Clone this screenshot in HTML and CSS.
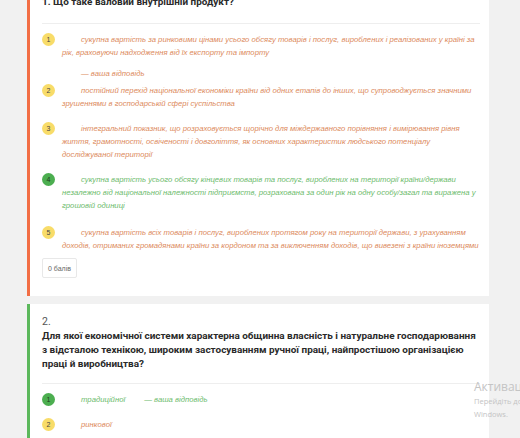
FILE: index.html
```html
<!DOCTYPE html>
<html lang="uk">
<head>
<meta charset="utf-8">
<link rel="stylesheet" href="styles.css">
</head>
<body>
<main class="page">
  <section class="card card-wrong">
    <h2 class="q-title">1. Що таке валовий внутрішній продукт?</h2>
    <hr class="divider">
    <div class="answers">
      <div class="answer answer-chosen">
        <span class="badge badge-yellow">1</span>
        <div class="a-body">
          <p class="a-text a-red">сукупна вартість за ринковими цінами усього обсягу товарів і послуг, вироблених і реалізованих у країні за рік, враховуючи надходження від їх експорту та імпорту</p>
          <p class="your-answer a-red">— ваша відповідь</p>
        </div>
      </div>
      <div class="answer">
        <span class="badge badge-yellow">2</span>
        <div class="a-body">
          <p class="a-text a-red">постійний перехід національної економіки країни від одних етапів до інших, що супроводжується значними зрушеннями в господарській сфері суспільства</p>
        </div>
      </div>
      <div class="answer">
        <span class="badge badge-yellow">3</span>
        <div class="a-body">
          <p class="a-text a-red">інтегральний показник, що розраховується щорічно для міждержавного порівняння і вимірювання рівня життя, грамотності, освіченості і довголіття, як основних характеристик людського потенціалу досліджуваної території</p>
        </div>
      </div>
      <div class="answer">
        <span class="badge badge-green">4</span>
        <div class="a-body">
          <p class="a-text a-green">сукупна вартість усього обсягу кінцевих товарів та послуг, вироблених на території країни/держави незалежно від національної належності підприємств, розрахована за один рік на одну особу/загал та виражена у грошовій одиниці</p>
        </div>
      </div>
      <div class="answer answer-last">
        <span class="badge badge-yellow">5</span>
        <div class="a-body">
          <p class="a-text a-red">сукупна вартість всіх товарів і послуг, вироблених протягом року на території держави, з урахуванням доходів, отриманих громадянами країни за кордоном та за виключенням доходів, що вивезені з країни іноземцями</p>
        </div>
      </div>
    </div>
    <div class="score">0 балів</div>
  </section>

  <section class="card card-right">
    <div class="q-num">2.</div>
    <h2 class="q-title q-title-2">Для якої економічної системи характерна общинна власність і натуральне господарювання з відсталою технікою, широким застосуванням ручної праці, найпростішою організацією праці й виробництва?</h2>
    <hr class="divider divider-2">
    <div class="answers">
      <div class="answer">
        <span class="badge badge-green">1</span>
        <div class="a-body">
          <p class="a-text a-green">традиційної<span class="your-inline">— ваша відповідь</span></p>
        </div>
      </div>
      <div class="answer">
        <span class="badge badge-yellow">2</span>
        <div class="a-body">
          <p class="a-text a-red">ринкової</p>
        </div>
      </div>
    </div>
  </section>
</main>

<div class="watermark">
  <div class="wm-title">Активація Windows</div>
  <div class="wm-sub">Перейдіть до розділу «Параметри», щоб активувати</div>
  <div class="wm-sub">Windows.</div>
</div>
</body>
</html>
```

FILE: styles.css
```css
* { box-sizing: border-box; }

html, body {
  margin: 0;
  padding: 0;
  background: #f1f1f1;
  overflow: hidden;
  height: 438px;
}

body {
  font-family: "Liberation Sans", Arial, sans-serif;
  color: #333;
}

.page {
  width: 489px;
  padding-left: 27px;
  margin-top: -5px;
  display: flex;
  flex-direction: column;
  gap: 8px;
}

.card {
  background: #fff;
  padding: 0 9px 18px 12px;
}

.card-wrong {
  border-left: 3px solid #f26e45;
  display: flex;
  flex-direction: column;
}

.card-right {
  border-left: 3px solid #5cb85c;
  padding-top: 11px;
}

.q-title {
  margin: 0;
  font-family: Roboto, "Liberation Sans", sans-serif;
  font-size: 9.95px;
  line-height: 14px;
  font-weight: bold;
  color: #2a2a2a;
}

.q-num {
  font-family: Roboto, "Liberation Sans", sans-serif;
  font-size: 10.5px;
  line-height: 14px;
  color: #555;
}

.divider {
  border: 0;
  border-top: 1px solid #eee;
  margin: 14px 0 9px 0;
}

.divider-2 {
  margin: 12px 0 9px 0;
}

.answers {
  display: flex;
  flex-direction: column;
  gap: 12px;
}

.answer {
  display: flex;
  align-items: flex-start;
}

.answer-chosen {
  margin-bottom: -8px;
}

.answer-last {
  margin-top: 2px;
}

.badge {
  flex: none;
  width: 13px;
  height: 13px;
  border-radius: 50%;
  font-size: 7px;
  line-height: 13px;
  text-align: center;
  color: #444;
}

.badge-yellow { background: #f8dc69; }
.badge-green { background: #4cae50; color: #1f3d1f; }

.a-body {
  margin-left: 7px;
  flex: 1;
}

.a-text {
  margin: 0;
  font-size: 7.72px;
  line-height: 13px;
  font-style: italic;
  text-indent: 19px;
}

.a-red { color: #dc8a5c; }
.a-green { color: #6cbb6c; }

.your-answer {
  margin: 8px 0 0 0;
  font-size: 7.72px;
  line-height: 13px;
  font-style: italic;
  padding-left: 19px;
}

.your-inline {
  margin-left: 19px;
  color: #6cbb6c;
}

.score {
  align-self: flex-start;
  margin-top: 6px;
  padding: 0 5px;
  height: 20px;
  line-height: 20px;
  font-size: 7px;
  color: #666;
  border: 1px solid #e8e8e8;
  border-radius: 2px;
}

.watermark {
  position: absolute;
  left: 474px;
  top: 379px;
  white-space: nowrap;
  font-family: "Open Sans", "Noto Sans", sans-serif;
  color: #c4c4c4;
}

.wm-title {
  font-size: 12px;
  line-height: 16px;
}

.wm-sub {
  font-size: 7.5px;
  line-height: 13px;
}
```
